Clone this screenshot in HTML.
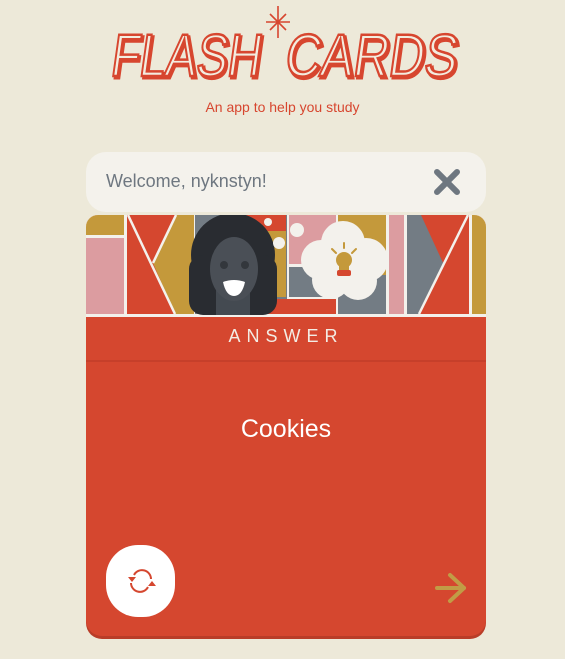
<!DOCTYPE html>
<html><head><meta charset="utf-8"><style>
body{margin:0;width:565px;height:659px;background:#ede9d9;font-family:"Liberation Sans",sans-serif;position:relative;overflow:hidden}
.sub{position:absolute;top:99px;left:0;width:565px;text-align:center;color:#d7462f;font-size:14px}
.bar{position:absolute;left:86px;top:152px;width:400px;height:60px;background:#f4f2ec;border-radius:20px}
.bar span{position:absolute;left:20px;top:19px;font-size:18px;color:#6e7780}
.card{position:absolute;left:86px;top:215px;width:400px;height:421px;background:#d5472f;border-radius:12px 12px 16px 16px;overflow:hidden;box-shadow:0 3px 0 #b93d28}
.ans{position:absolute;top:111px;width:400px;text-align:center;color:#f3ece4;font-size:18px;letter-spacing:6px}
.hr{position:absolute;top:145px;left:0;width:400px;height:2px;background:#c63f2a}
.ck{position:absolute;top:200px;width:400px;text-align:center;color:#fff;font-size:25px}
.btn{position:absolute;left:20px;top:330px;width:69px;height:72px;background:#fff;border-radius:32px}
</style></head><body>
<svg style="position:absolute;left:0;top:0" width="565" height="95">
<g font-family="Liberation Sans" font-size="60" fill="#d7462f" transform="skewX(-8) translate(10,0)">
<text x="112" y="78" textLength="150" lengthAdjust="spacingAndGlyphs" stroke="#d7462f" stroke-width="3">FLASH</text>
<text x="286" y="78" textLength="172" lengthAdjust="spacingAndGlyphs" stroke="#d7462f" stroke-width="3">CARDS</text>
<text x="110" y="76" textLength="150" lengthAdjust="spacingAndGlyphs" fill="#f3ecdf" stroke="#d7462f" stroke-width="2.5">FLASH</text>
<text x="284" y="76" textLength="172" lengthAdjust="spacingAndGlyphs" fill="#f3ecdf" stroke="#d7462f" stroke-width="2.5">CARDS</text>
</g>
<g stroke="#d7462f" stroke-width="1.6" transform="translate(263,5)"><line x1="15" y1="1" x2="15" y2="33"/><line x1="3" y1="17" x2="27" y2="17"/><line x1="7" y1="9" x2="23" y2="25"/><line x1="23" y1="9" x2="7" y2="25"/></g>
</svg>
<div class="sub">An app to help you study</div>
<div class="bar"><span>Welcome, nyknstyn!</span>
<svg style="position:absolute;left:347px;top:16px" width="28" height="28"><g stroke="#6e7780" stroke-width="6" stroke-linecap="round"><line x1="4" y1="4" x2="24" y2="24"/><line x1="24" y1="4" x2="4" y2="24"/></g></svg></div>
<div class="card">
<svg width="400" height="102" style="position:absolute;left:0;top:0">
<rect width="400" height="102" fill="#f3f1ec"/>
<rect x="0" y="0" width="38" height="20" fill="#c4993b"/>
<rect x="0" y="23" width="38" height="76" fill="#dc9ca0"/>
<rect x="41" y="0" width="67" height="99" fill="#d5472f"/>
<polygon points="90,0 108,0 108,99 89,99 67,48" fill="#c4993b"/>
<line x1="42" y1="0" x2="89" y2="99" stroke="#f3f1ec" stroke-width="2.5"/>
<line x1="67" y1="48" x2="90" y2="0" stroke="#f3f1ec" stroke-width="2.5"/>
<rect x="109" y="0" width="92" height="99" fill="#737c84"/>
<rect x="150" y="0" width="50" height="16" fill="#d5472f"/>
<rect x="175" y="16" width="25" height="66" fill="#c4993b"/>
<rect x="150" y="84" width="100" height="15" fill="#d5472f"/>
<rect x="203" y="0" width="47" height="49" fill="#dc9ca0"/>
<rect x="203" y="52" width="47" height="30" fill="#737c84"/>
<rect x="252" y="0" width="48" height="60" fill="#c4993b"/>
<rect x="252" y="60" width="48" height="39" fill="#737c84"/>
<rect x="303" y="0" width="15" height="99" fill="#dc9ca0"/>
<rect x="321" y="0" width="62" height="99" fill="#d5472f"/>
<polygon points="321,0 335,0 358,50 333,99 321,99" fill="#737c84"/>
<line x1="382" y1="0" x2="333" y2="99" stroke="#f3f1ec" stroke-width="2.5"/>
<rect x="386" y="0" width="14" height="99" fill="#c4993b"/>
<g fill="#292c31"><ellipse cx="147" cy="40" rx="42" ry="42"/><rect x="103" y="40" width="88" height="60" rx="14"/></g>
<rect x="130" y="75" width="34" height="25" fill="#444a51"/>
<ellipse cx="148" cy="54" rx="24" ry="32" fill="#4a4f56"/>
<circle cx="138" cy="50" r="4" fill="#33373c"/><circle cx="159" cy="50" r="4" fill="#33373c"/>
<path d="M137 67 Q148 63 159 67 Q156 81 148 81 Q140 81 137 67Z" fill="#fff"/>
<circle cx="182" cy="7" r="4" fill="#f3f1ec"/><circle cx="193" cy="28" r="6" fill="#f3f1ec"/><circle cx="211" cy="15" r="7" fill="#f3f1ec"/>
<g fill="#f3f1ec"><circle cx="257" cy="28" r="22"/><circle cx="235" cy="45" r="20"/><circle cx="280" cy="45" r="22"/><circle cx="245" cy="65" r="19"/><circle cx="272" cy="66" r="19"/><circle cx="258" cy="50" r="25"/></g>
<circle cx="258" cy="45" r="8" fill="#c4993b"/><rect x="253" y="47" width="10" height="8" fill="#c4993b"/>
<rect x="251" y="55" width="14" height="6" rx="2" fill="#d5472f"/>
<g stroke="#c4993b" stroke-width="2" stroke-linecap="round"><line x1="258" y1="28" x2="258" y2="33"/><line x1="246" y1="34" x2="250" y2="38"/><line x1="270" y1="34" x2="266" y2="38"/></g>
</svg>
<div class="ans">ANSWER</div>
<div class="hr"></div>
<div class="ck">Cookies</div>
<div class="btn"><svg width="69" height="72"><g fill="none" stroke="#d5472f" stroke-width="2"><path d="M28 30 A9 9 0 0 1 45 34"/><path d="M42 42 A9 9 0 0 1 25 38"/></g><polygon points="22,32 30,32 26,37" fill="#d5472f"/><polygon points="42,41 46,36 50,41" fill="#d5472f"/></svg></div>
<svg style="position:absolute;left:348px;top:357px" width="34" height="34"><g fill="none" stroke="#c19c46" stroke-width="4" stroke-linecap="round" stroke-linejoin="round"><line x1="3" y1="16" x2="30" y2="16"/><polyline points="16,3 30,16 16,29"/></g></svg>
</div>
</body></html>
